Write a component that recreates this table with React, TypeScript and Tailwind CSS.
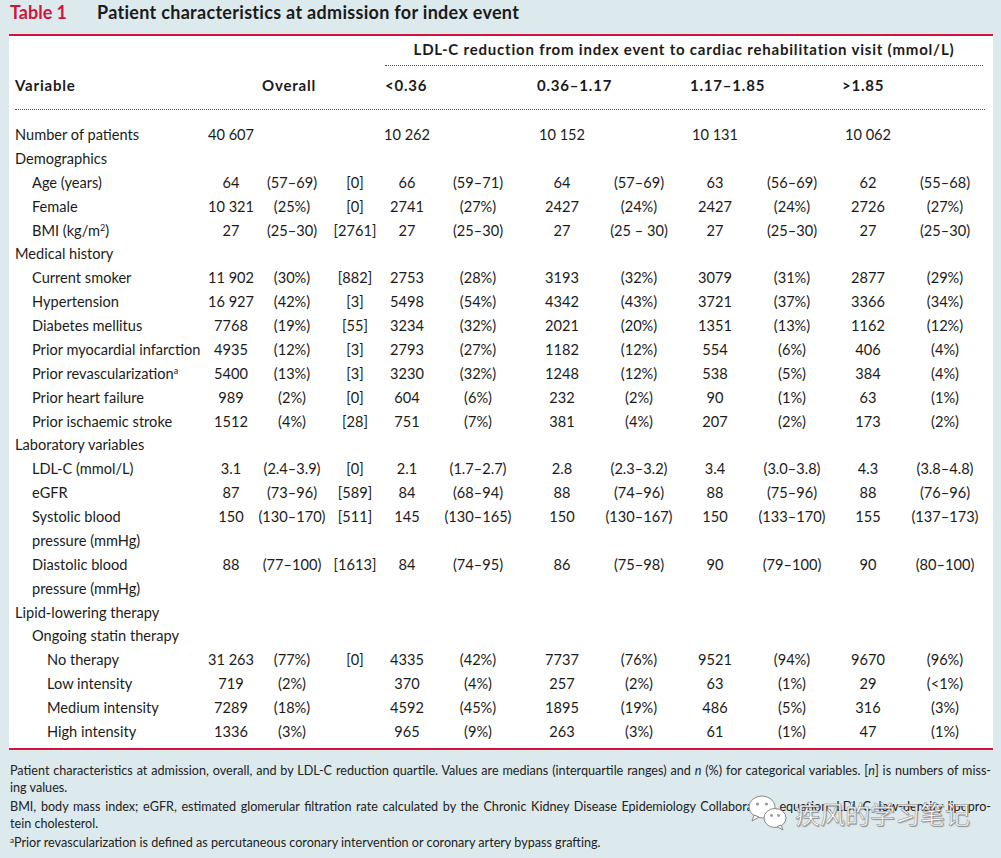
import React from "react";

type Row = {
  label: React.ReactNode;
  level?: 0 | 1 | 2;
  v?: string[];
};

const ROWS: Row[] = [
  { label: "Number of patients", v: ["40 607", "", "", "10 262", "", "10 152", "", "10 131", "", "10 062", ""] },
  { label: "Demographics" },
  { label: "Age (years)", level: 1, v: ["64", "(57–69)", "[0]", "66", "(59–71)", "64", "(57–69)", "63", "(56–69)", "62", "(55–68)"] },
  { label: "Female", level: 1, v: ["10 321", "(25%)", "[0]", "2741", "(27%)", "2427", "(24%)", "2427", "(24%)", "2726", "(27%)"] },
  {
    label: (
      <>
        BMI (kg/m<sup className="text-[9px]">2</sup>)
      </>
    ),
    level: 1,
    v: ["27", "(25–30)", "[2761]", "27", "(25–30)", "27", "(25 – 30)", "27", "(25–30)", "27", "(25–30)"],
  },
  { label: "Medical history" },
  { label: "Current smoker", level: 1, v: ["11 902", "(30%)", "[882]", "2753", "(28%)", "3193", "(32%)", "3079", "(31%)", "2877", "(29%)"] },
  { label: "Hypertension", level: 1, v: ["16 927", "(42%)", "[3]", "5498", "(54%)", "4342", "(43%)", "3721", "(37%)", "3366", "(34%)"] },
  { label: "Diabetes mellitus", level: 1, v: ["7768", "(19%)", "[55]", "3234", "(32%)", "2021", "(20%)", "1351", "(13%)", "1162", "(12%)"] },
  { label: "Prior myocardial infarction", level: 1, v: ["4935", "(12%)", "[3]", "2793", "(27%)", "1182", "(12%)", "554", "(6%)", "406", "(4%)"] },
  {
    label: (
      <>
        Prior revascularization<sup className="text-[9px]">a</sup>
      </>
    ),
    level: 1,
    v: ["5400", "(13%)", "[3]", "3230", "(32%)", "1248", "(12%)", "538", "(5%)", "384", "(4%)"],
  },
  { label: "Prior heart failure", level: 1, v: ["989", "(2%)", "[0]", "604", "(6%)", "232", "(2%)", "90", "(1%)", "63", "(1%)"] },
  { label: "Prior ischaemic stroke", level: 1, v: ["1512", "(4%)", "[28]", "751", "(7%)", "381", "(4%)", "207", "(2%)", "173", "(2%)"] },
  { label: "Laboratory variables" },
  { label: "LDL-C (mmol/L)", level: 1, v: ["3.1", "(2.4–3.9)", "[0]", "2.1", "(1.7–2.7)", "2.8", "(2.3–3.2)", "3.4", "(3.0–3.8)", "4.3", "(3.8–4.8)"] },
  { label: "eGFR", level: 1, v: ["87", "(73–96)", "[589]", "84", "(68–94)", "88", "(74–96)", "88", "(75–96)", "88", "(76–96)"] },
  {
    label: (
      <>
        Systolic blood
        <br />
        pressure (mmHg)
      </>
    ),
    level: 1,
    v: ["150", "(130–170)", "[511]", "145", "(130–165)", "150", "(130–167)", "150", "(133–170)", "155", "(137–173)"],
  },
  {
    label: (
      <>
        Diastolic blood
        <br />
        pressure (mmHg)
      </>
    ),
    level: 1,
    v: ["88", "(77–100)", "[1613]", "84", "(74–95)", "86", "(75–98)", "90", "(79–100)", "90", "(80–100)"],
  },
  { label: "Lipid-lowering therapy" },
  { label: "Ongoing statin therapy", level: 1 },
  { label: "No therapy", level: 2, v: ["31 263", "(77%)", "[0]", "4335", "(42%)", "7737", "(76%)", "9521", "(94%)", "9670", "(96%)"] },
  { label: "Low intensity", level: 2, v: ["719", "(2%)", "", "370", "(4%)", "257", "(2%)", "63", "(1%)", "29", "(<1%)"] },
  { label: "Medium intensity", level: 2, v: ["7289", "(18%)", "", "4592", "(45%)", "1895", "(19%)", "486", "(5%)", "316", "(3%)"] },
  { label: "High intensity", level: 2, v: ["1336", "(3%)", "", "965", "(9%)", "263", "(3%)", "61", "(1%)", "47", "(1%)"] },
];

// label column + 11 value columns, widths picked so each column centre sits where the print has it
const GRID =
  "grid grid-cols-[196px_52px_70px_56px_48px_94px_74px_80px_72px_82px_70px_84px]";

const INDENT = ["pl-[6px]", "pl-[23px]", "pl-[38px]"];

function WeChatMark() {
  return (
    <svg width="42" height="38" viewBox="0 0 42 38" aria-hidden>
      <ellipse cx="15" cy="13" rx="13" ry="11" fill="#fff" stroke="#888" strokeWidth="1" />
      <path d="M7 21 L5 27 L12 23 Z" fill="#fff" stroke="#888" strokeWidth="1" />
      <circle cx="10.5" cy="10" r="1.6" fill="#999" />
      <circle cx="19.5" cy="10" r="1.6" fill="#999" />
      <ellipse cx="28" cy="24" rx="11" ry="9.5" fill="#fff" stroke="#888" strokeWidth="1" />
      <path d="M34 31 L36 36 L30 32.5 Z" fill="#fff" stroke="#888" strokeWidth="1" />
      <circle cx="24.5" cy="21.5" r="1.4" fill="#999" />
      <circle cx="31.5" cy="21.5" r="1.4" fill="#999" />
    </svg>
  );
}

export default function App() {
  return (
    <div className="relative h-[858px] w-[1001px] overflow-hidden bg-[#dce9ed] font-['Lato','Open_Sans',sans-serif] text-[#1b1b1b]">
      {/* caption band */}
      <div className="flex h-[34px] items-start pl-[10px] pt-[1px] text-[18px] font-bold leading-[22px]">
        <span className="w-[87px] text-[#d0143c]">Table 1</span>
        <span className="tracking-[0.3px]">Patient characteristics at admission for index event</span>
      </div>

      {/* table panel */}
      <div className="ml-[9px] w-[984px] border-y-2 border-[#d0143c] bg-white pb-[4px] text-[14.6px]">
        <div className="ml-[376px] mr-[10px] h-[30px] border-b border-dotted border-[#d0143c] pt-[3px] text-center text-[15px] font-bold leading-[20px] tracking-[0.8px]">
          LDL-C reduction from index event to cardiac rehabilitation visit (mmol/L)
        </div>
        <div className="ml-[6px] mr-[8px] flex h-[44px] items-start border-b border-dotted border-[#d0143c] pt-[9px] text-[15px] font-bold leading-[20px] tracking-[0.8px]">
          <span className="w-[247px]">Variable</span>
          <span className="w-[123px]">Overall</span>
          <span className="w-[152px]">&lt;0.36</span>
          <span className="w-[153px]">0.36–1.17</span>
          <span className="w-[152px]">1.17–1.85</span>
          <span>&gt;1.85</span>
        </div>

        <div className="pt-[13px]">
          {ROWS.map((r, i) => (
            <div key={i} className={`${GRID} leading-[23.88px]`}>
              <div className={`${INDENT[r.level ?? 0]} whitespace-nowrap`}>{r.label}</div>
              {(r.v ?? Array(11).fill("")).map((val, j) => (
                <div key={j} className="whitespace-nowrap text-center">
                  {val}
                </div>
              ))}
            </div>
          ))}
        </div>
      </div>

      {/* footnotes */}
      <div className="mt-[12px] px-[10px] text-[12.6px] leading-[17px] text-[#222]">
        <p className="text-justify [text-align-last:justify]">
          Patient characteristics at admission, overall, and by LDL-C reduction quartile. Values are medians
          (interquartile ranges) and <i>n</i> (%) for categorical variables. [<i>n</i>] is numbers of miss-
        </p>
        <p>ing values.</p>
        <p className="mt-[2px] text-justify [text-align-last:justify]">
          BMI, body mass index; eGFR, estimated glomerular filtration rate calculated by the Chronic Kidney
          Disease Epidemiology Collaboration equation; LDL-C, low-density lipopro-
        </p>
        <p>tein cholesterol.</p>
        <p className="mt-[2px]">
          <sup className="text-[8px]">a</sup>Prior revascularization is defined as percutaneous coronary
          intervention or coronary artery bypass grafting.
        </p>
      </div>

      {/* watermark overlay */}
      <div className="pointer-events-none absolute left-[747px] top-[794px] flex items-center gap-[6px]">
        <WeChatMark />
        <span className="font-['Noto_Sans_CJK_SC',sans-serif] text-[25px] leading-[30px] text-white [-webkit-text-stroke:0.5px_#8a8a8a] [text-shadow:1px_1px_1px_rgba(0,0,0,0.35)]">
          疾风的学习笔记
        </span>
      </div>
    </div>
  );
}
